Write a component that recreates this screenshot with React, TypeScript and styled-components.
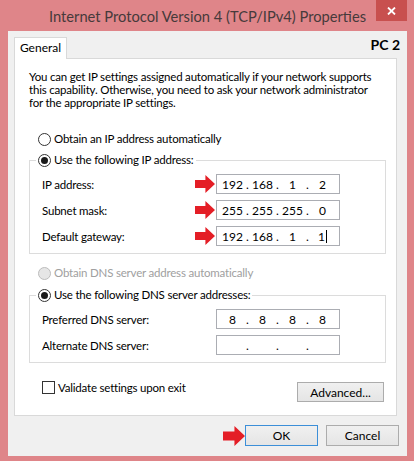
import React from "react";
import styled, { createGlobalStyle } from "styled-components";

const FONT = `Lato, "Noto Sans", sans-serif`;
const TEXT_SIZE = "11.5px";
const TEXT_SPACING = "-0.2px";

const Global = createGlobalStyle`
  html, body { margin: 0; padding: 0; background: #fff; }
  body { width: 414px; height: 461px; overflow: hidden; font-family: ${FONT}; font-size: ${TEXT_SIZE}; color: #000; }
  * { box-sizing: border-box; }
`;

const Window = styled.div`
  width: 414px;
  height: 461px;
  background: #df8589;
  display: flex;
  flex-direction: column;
  padding: 0 7px 5px 8px;
`;

const TitleBar = styled.div`
  height: 31px;
  flex: none;
  display: grid;
  grid-template-columns: 1fr auto 1fr;
  align-items: center;
`;

const Title = styled.div`
  grid-column: 2;
  font-size: 14.7px;
  color: #463a3b;
  white-space: nowrap;
`;

const CloseButton = styled.div`
  grid-column: 3;
  justify-self: end;
  align-self: start;
  width: 31px;
  height: 21px;
  background: #c8504f;
  display: flex;
  align-items: center;
  justify-content: center;
`;

const Client = styled.div`
  flex: 1;
  background: #f0f0f0;
  display: flex;
  flex-direction: column;
  padding: 6px 6px 10px 6px;
`;

const TabRow = styled.div`
  display: flex;
  justify-content: space-between;
  align-items: flex-start;
  height: 21px;
  flex: none;
`;

const Tab = styled.div`
  position: relative;
  z-index: 1;
  width: 53px;
  height: 22px;
  background: #fff;
  border: 1px solid #d9d9d9;
  border-bottom: none;
  font-size: 12px;
  line-height: 20px;
  text-align: center;
`;

const PcLabel = styled.div`
  font-size: 14px;
  font-weight: 700;
  line-height: 14px;
  margin: 1px 1px 0 0;
`;

const Panel = styled.div`
  flex: 1;
  background: #fff;
  border: 1px solid #d9d9d9;
  margin-right: 4px;
  padding: 11px 10px 0 14px;
  display: flex;
  flex-direction: column;
  letter-spacing: ${TEXT_SPACING};
`;

const Intro = styled.p`
  margin: 0;
  font-size: ${TEXT_SIZE};
  line-height: 13px;
  white-space: nowrap;
`;

const RadioRow = styled.label<{ $top: number; $disabled?: boolean }>`
  display: flex;
  align-items: center;
  gap: 3px;
  height: 16px;
  margin: ${(p) => p.$top}px 0 0 9px;
  font-size: ${TEXT_SIZE};
  line-height: 16px;
  color: ${(p) => (p.$disabled ? "#a0a0a0" : "#000")};
`;

const RadioDot = styled.span<{ $checked?: boolean; $disabled?: boolean }>`
  width: 13px;
  height: 13px;
  flex: none;
  border-radius: 50%;
  border: 1px solid ${(p) => (p.$disabled ? "#bcbcbc" : "#333")};
  background: ${(p) => (p.$disabled ? "#e6e6e6" : "#fff")};
  display: flex;
  align-items: center;
  justify-content: center;
  &::after {
    content: "";
    display: ${(p) => (p.$checked ? "block" : "none")};
    width: 7px;
    height: 7px;
    border-radius: 50%;
    background: #1a1a1a;
  }
`;

const Group = styled.fieldset<{ $top: number }>`
  margin: ${(p) => p.$top}px 0 0 0;
  border: 1px solid #dcdcdc;
  padding: 6px 0 7px 12px;
  min-width: 0;
`;

const GroupLegend = styled.legend`
  display: flex;
  align-items: center;
  gap: 3px;
  height: 16px;
  padding: 0 2px;
  margin-left: -6px;
  font-size: ${TEXT_SIZE};
  line-height: 16px;
`;

const FieldGrid = styled.div`
  display: grid;
  grid-template-columns: 153px 21px 124px;
  row-gap: 6px;
  align-items: center;
`;

const FieldLabel = styled.div`
  font-size: ${TEXT_SIZE};
`;

const ArrowCell = styled.div`
  display: flex;
  align-items: center;
  height: 20px;
`;

const IpBox = styled.div`
  width: 124px;
  height: 20px;
  border: 1px solid #abadb3;
  background: #fff;
  display: flex;
  align-items: center;
  padding-left: 3px;
  font-size: 12px;
  letter-spacing: 0;
`;

const Seg = styled.span`
  width: 25px;
  text-align: center;
  white-space: nowrap;
`;

const Dot = styled.span`
  width: 5px;
  text-align: center;
`;

const Caret = styled.span`
  display: inline-block;
  width: 1px;
  height: 13px;
  margin-left: 1px;
  background: #000;
  vertical-align: -2px;
`;

const BottomRow = styled.div`
  display: flex;
  justify-content: space-between;
  align-items: flex-start;
  margin-top: 18px;
`;

const CheckLabel = styled.label`
  display: flex;
  align-items: center;
  gap: 3px;
  height: 13px;
  margin-left: 13px;
  font-size: ${TEXT_SIZE};
`;

const CheckBox = styled.span`
  width: 13px;
  height: 13px;
  border: 1px solid #333;
  background: #fff;
  flex: none;
`;

const Button = styled.button<{ $width: number; $tall?: boolean; $default?: boolean }>`
  width: ${(p) => p.$width}px;
  height: ${(p) => (p.$tall ? 21 : 20)}px;
  margin: 0;
  padding: 0;
  font-family: ${FONT};
  font-size: 12px;
  letter-spacing: 0;
  color: #000;
  background: linear-gradient(#f0f0f0, #e5e5e5);
  border: 1px solid ${(p) => (p.$default ? "#3c8fd8" : "#acacac")};
  border-radius: 0;
`;

const AdvancedButton = styled(Button)`
  margin: 1px 2px 0 0;
`;

const ButtonRow = styled.div`
  flex: none;
  display: flex;
  justify-content: flex-end;
  align-items: center;
  gap: 8px;
  margin-top: 9px;
  padding-right: 2px;
`;

const OkGroup = styled.div`
  display: flex;
  align-items: center;
`;

const RedArrow = ({ w, h }: { w: number; h: number }) => {
  const shaftTop = h * 0.28;
  const shaftBottom = h * 0.72;
  const headX = w * 0.52;
  return (
    <svg width={w} height={h} viewBox={`0 0 ${w} ${h}`}>
      <polygon
        points={`0,${shaftTop} ${headX},${shaftTop} ${headX},0 ${w},${h / 2} ${headX},${h} ${headX},${shaftBottom} 0,${shaftBottom}`}
        fill="#e41e26"
      />
    </svg>
  );
};

const IpValue = ({ parts, caret }: { parts: string[]; caret?: boolean }) => (
  <IpBox>
    {parts.map((p, i) => (
      <React.Fragment key={i}>
        <Seg>
          {p}
          {caret && i === 3 ? <Caret /> : null}
        </Seg>
        {i < 3 ? <Dot>.</Dot> : null}
      </React.Fragment>
    ))}
  </IpBox>
);

const ipRows = [
  { label: "IP address:", parts: ["192", "168", "1", "2"] },
  { label: "Subnet mask:", parts: ["255", "255", "255", "0"] },
  { label: "Default gateway:", parts: ["192", "168", "1", "1"], caret: true },
];

const dnsRows = [
  { label: "Preferred DNS server:", parts: ["8", "8", "8", "8"] },
  { label: "Alternate DNS server:", parts: ["", "", "", ""] },
];

export default function App() {
  return (
    <>
      <Global />
      <Window>
        <TitleBar>
          <Title>Internet Protocol Version 4 (TCP/IPv4) Properties</Title>
          <CloseButton>
            <svg width="9" height="8" viewBox="0 0 9 8">
              <path d="M1 0.5 L8 7.5 M8 0.5 L1 7.5" stroke="#fff" strokeWidth="1.8" />
            </svg>
          </CloseButton>
        </TitleBar>
        <Client>
          <TabRow>
            <Tab>General</Tab>
            <PcLabel>PC 2</PcLabel>
          </TabRow>
          <Panel>
            <Intro>
              You can get IP settings assigned automatically if your network supports
              <br />
              this capability. Otherwise, you need to ask your network administrator
              <br />
              for the appropriate IP settings.
            </Intro>
            <RadioRow $top={22}>
              <RadioDot />
              Obtain an IP address automatically
            </RadioRow>
            <Group $top={5}>
              <GroupLegend>
                <RadioDot $checked />
                Use the following IP address:
              </GroupLegend>
              <FieldGrid>
                {ipRows.map((r) => (
                  <React.Fragment key={r.label}>
                    <FieldLabel>{r.label}</FieldLabel>
                    <ArrowCell>
                      <RedArrow w={20} h={18} />
                    </ArrowCell>
                    <IpValue parts={r.parts} caret={r.caret} />
                  </React.Fragment>
                ))}
              </FieldGrid>
            </Group>
            <RadioRow $top={11} $disabled>
              <RadioDot $disabled />
              Obtain DNS server address automatically
            </RadioRow>
            <Group $top={6}>
              <GroupLegend>
                <RadioDot $checked />
                Use the following DNS server addresses:
              </GroupLegend>
              <FieldGrid>
                {dnsRows.map((r) => (
                  <React.Fragment key={r.label}>
                    <FieldLabel>{r.label}</FieldLabel>
                    <ArrowCell />
                    <IpValue parts={r.parts} />
                  </React.Fragment>
                ))}
              </FieldGrid>
            </Group>
            <BottomRow>
              <CheckLabel>
                <CheckBox />
                Validate settings upon exit
              </CheckLabel>
              <AdvancedButton $width={87}>Advanced...</AdvancedButton>
            </BottomRow>
          </Panel>
          <ButtonRow>
            <OkGroup>
              <RedArrow w={22} h={20} />
              <Button $width={73} $tall $default>
                OK
              </Button>
            </OkGroup>
            <Button $width={73} $tall>
              Cancel
            </Button>
          </ButtonRow>
        </Client>
      </Window>
    </>
  );
}
